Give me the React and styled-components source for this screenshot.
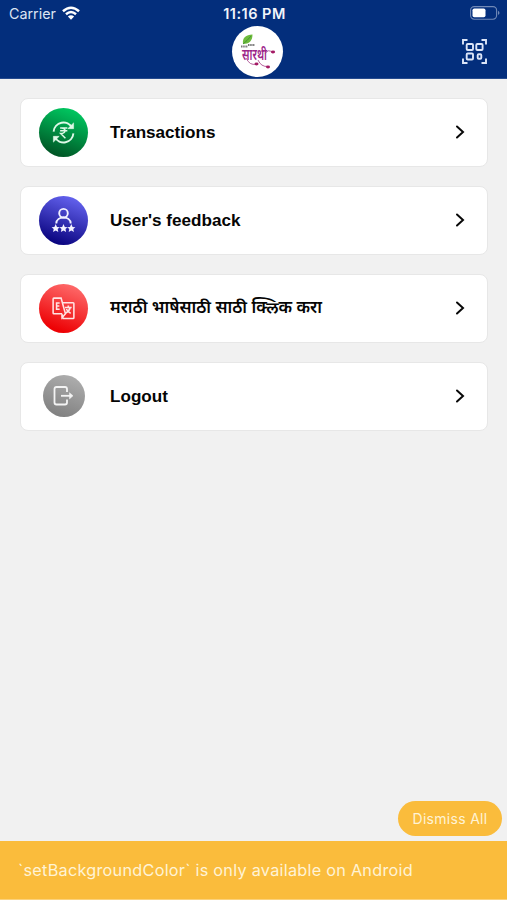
import React from 'react'
import styled, { createGlobalStyle } from 'styled-components'

const GlobalStyle = createGlobalStyle`
	* {
		box-sizing: border-box;
	}

	body {
		margin: 0;
		background: #f1f1f1;
		font-family: 'Liberation Sans', 'Noto Sans', sans-serif;
	}
`

const Screen = styled.div`
	display: flex;
	flex-direction: column;
	width: 100%;
	height: 900px;
	overflow: hidden;
	background: #f1f1f1;
`

const Header = styled.header`
	height: 79px;
	flex-shrink: 0;
	background: #032e7c;
	border-bottom: 1px solid #264b8f;
	color: #fff;
`

const HeaderRow = styled.div`
	display: grid;
	grid-template-columns: 1fr auto 1fr;
	align-items: center;
	height: ${props => props.height};
	padding: 0 ${props => props.right} 0 ${props => props.left};

	> :last-child {
		justify-self: end;
	}
`

const Carrier = styled.div`
	display: flex;
	align-items: center;
	gap: 6px;
	padding-top: 1px;
	font: 400 14.3px Inter, sans-serif;
	color: #dce4f3;
`

const Clock = styled.time`
	padding-top: 1px;
	font: 600 14.5px Inter, sans-serif;
	letter-spacing: 0.5px;
	color: #f2f5fb;
`

const LogoCircle = styled.div`
	width: 51px;
	height: 51px;
	border-radius: 50%;
	background: #fff;
	overflow: hidden;
`

const Menu = styled.main`
	display: flex;
	flex-direction: column;
	flex: 1;
	gap: 19px;
	padding: 19px 19px 0 20px;
`

const MenuCard = styled.button`
	display: flex;
	align-items: center;
	height: 69px;
	padding: 0 21px 1px 18px;
	border: 1px solid #e7e7e7;
	border-radius: 8px;
	background: #fff;
	color: #050505;
	text-align: left;
	cursor: pointer;
`

const IconSlot = styled.span`
	display: flex;
	justify-content: center;
	width: 49px;
	margin-right: 22px;
`

const IconCircle = styled.span`
	display: flex;
	align-items: center;
	justify-content: center;
	width: ${props => props.size}px;
	height: ${props => props.size}px;
	border-radius: 50%;
	background: ${props => props.fill};
`

const MenuLabel = styled.span`
	flex: 1;
	padding-top: 2px;
	font: 700 17.1px 'Liberation Sans', 'Noto Sans', sans-serif;
	white-space: nowrap;
`

const MarathiLabel = styled(MenuLabel)`
	padding: 0 0 3px;
	font: 600 16.85px 'Noto Sans', 'Noto Sans Devanagari', sans-serif;
`

const Footer = styled.footer`
	display: flex;
	flex-direction: column;
`

const DismissButton = styled.button`
	align-self: flex-end;
	width: 104px;
	height: 35px;
	margin: 0 5px 5px 0;
	padding: 0;
	border: none;
	border-radius: 18px;
	background: #fabc3c;
	color: #fff3d5;
	font: 400 14px Inter, sans-serif;
	letter-spacing: 0.3px;
	cursor: pointer;
`

const Warning = styled.div`
	display: flex;
	align-items: center;
	height: 59px;
	padding: 0 18px;
	background: #fabc3c;
	border-bottom: 1px solid #fbd27c;
	color: #fff3d5;
	font: 400 16.3px Inter, sans-serif;
	letter-spacing: 0.24px;
	white-space: nowrap;
`

const WifiIcon = () => (
	<svg width="18" height="15" viewBox="0 0 19 15" fill="none" stroke="#fff" strokeWidth="2.6">
		<path d="M1 5.1Q9.5 -2.4 18 5.1" />
		<path d="M4.2 8.3Q9.5 3.6 14.8 8.3" />
		<path d="M6.2 10.7Q9.5 8 12.8 10.7L9.5 14Z" fill="#fff" stroke="none" />
	</svg>
)

const BatteryIcon = () => (
	<svg width="30" height="14" viewBox="0 0 30 14">
		<rect x="0.6" y="0.6" width="26" height="12.6" rx="3.6" fill="none" stroke="#7189b7" strokeWidth="1.1" />
		<rect x="2.5" y="2.5" width="13" height="8.8" rx="1.8" fill="#fff" />
		<path d="M28 4.7Q31 6.9 28 9.1Z" fill="#7189b7" />
	</svg>
)

const QrIcon = () => (
	<svg width="25" height="25" viewBox="0 0 25 25" fill="none" stroke="#dce5f8" strokeWidth="1.9">
		<path d="M1 5.5V1H5.5M19.5 1H24V5.5M24 19.5V24H19.5M5.5 24H1V19.5" />
		<rect x="4.7" y="5" width="6.3" height="6" rx="1" />
		<rect x="14.3" y="5" width="6.3" height="6" rx="1" />
		<rect x="4.7" y="14.5" width="6.3" height="6" rx="1" />
		<rect x="15.7" y="15.3" width="3.6" height="4.4" rx="1" />
	</svg>
)

const Logo = () => (
	<svg width="51" height="51" viewBox="0 0 51 51">
		<path d="M11 18C10 12 14 8.500 20.500 8.500C20.500 15 17 18 11 18Z" fill="#6dbb3c" />
		<path d="M11 18Q15 15 19 10" fill="none" stroke="#3f8d32" strokeWidth="0.8" />
		<path d="M9 20.500H16M16 19H23" stroke="#777" strokeWidth="2" strokeDasharray="1.5 0.7" />
		<text x="10" y="34" fill="#9c2589" fontFamily="'Noto Sans', sans-serif" fontSize="15.5" fontWeight="600" textLength="25" lengthAdjust="spacingAndGlyphs">सारथी</text>
		<g fill="none" stroke="#a33b85" strokeWidth="0.8">
			<path d="M33 28Q36 22 41 27" />
			<path d="M14 32Q18 40 24 38" />
			<path d="M26 34Q29 41 36 40.500" />
		</g>
		<g fill="#a41a64">
			<ellipse cx="41" cy="26" rx="2.1" ry="1.4" />
			<ellipse cx="24.5" cy="38" rx="2" ry="1.4" />
			<ellipse cx="36" cy="41" rx="2" ry="1.4" />
		</g>
	</svg>
)

const TransactionsIcon = () => (
	<svg width="25" height="25" viewBox="0 0 26 26" fill="none" stroke="#dff9e8" strokeWidth="2">
		<path d="M2.7 12A10.3 10.3 0 0 1 22 8M23.3 14A10.3 10.3 0 0 1 4 18" />
		<path d="M23.5 3V9H17.5ZM2.5 23V17H8.5Z" fill="#dff9e8" strokeWidth="0.6" />
		<path d="M9.5 8.3H17M9.5 11.2H17M11 8.3C16 8.3 16 14 10 14L15 19" strokeWidth="1.5" />
	</svg>
)

const star = 'M0 -4.2L1.3 -1.4L4.1 -1.1L2 0.8L2.6 3.7L0 2.3L-2.6 3.7L-2 0.8L-4.1 -1.1L-1.3 -1.4Z'

const FeedbackIcon = () => (
	<svg width="26" height="26" viewBox="0 0 26 26" fill="none" stroke="#f0f0ff" strokeWidth="1.9">
		<circle cx="12.5" cy="6.2" r="4.3" />
		<path d="M5.300 16.500C5.500 8.500 19.500 8.500 19.700 16.500" />
		<g fill="#f4f3ff" stroke="none">
			<path d={star} transform="translate(4.7 21.3)" />
			<path d={star} transform="translate(12.5 21.3)" />
			<path d={star} transform="translate(20.3 21.3)" />
		</g>
	</svg>
)

const LanguageIcon = () => (
	<svg width="25" height="25" viewBox="0 0 26 26" fill="none" stroke="#ffe4e4" strokeWidth="1.6">
		<path d="M11.5 18.5H3Q2.2 18.5 2.2 17.7V3Q2.2 2.2 3 2.2H10.5L15 18.5L11.5 22.5V18.5" />
		<path d="M11.8 7H23Q23.8 7 23.8 7.8V22.5Q23.8 23.3 23 23.3H12.5L11.5 20" />
		<path d="M9 7.2H5.8V13.7H9M5.8 10.4H8.7" strokeWidth="1.6" />
		<path d="M14.5 12H21.5M18 10V12M20 12Q19 16 15 18M16 13.5Q17.5 17 20.5 18" strokeWidth="1.7" />
	</svg>
)

const LogoutIcon = () => (
	<svg width="23" height="22" viewBox="0 0 23 22" fill="none" stroke="#f3f3f3" strokeWidth="1.8">
		<path d="M15 7V4Q15 2 13 2H4.5Q2.5 2 2.5 4V17.5Q2.5 19.500 4.500 19.500H13Q15 19.500 15 17.500V14.500" />
		<path d="M9 10.800H19" />
		<path d="M17.500 7.700L21 10.800L17.500 13.900Z" fill="#f3f3f3" strokeWidth="0.5" />
	</svg>
)

const Chevron = () => (
	<svg width="12" height="16" viewBox="0 0 12 16" fill="none" stroke="#080808" strokeWidth="2" strokeLinecap="round">
		<path d="M3 2.5L9 8L3 13.5" />
	</svg>
)

const menuItems = [
	{ label: 'Transactions', Icon: TransactionsIcon, size: 49, fill: 'linear-gradient(200deg, #00cf64 5%, #004c20 95%)' },
	{ label: "User's feedback", Icon: FeedbackIcon, size: 49, fill: 'linear-gradient(200deg, #6968f5 5%, #08027d 90%)' },
	{ label: 'मराठी भाषेसाठी साठी क्लिक करा', Icon: LanguageIcon, size: 49, fill: 'linear-gradient(200deg, #ff7070 5%, #ed0205 85%)', marathi: true },
	{ label: 'Logout', Icon: LogoutIcon, size: 42, fill: 'linear-gradient(200deg, #b0b0b0 5%, #7d7d7d 95%)' },
]

const App = () => {
	return (
		<Screen>
			<GlobalStyle />
			<Header>
				<HeaderRow height="26px" left="9px" right="7px">
					<Carrier>Carrier <WifiIcon /></Carrier>
					<Clock>11:16 PM</Clock>
					<BatteryIcon />
				</HeaderRow>
				<HeaderRow height="51px" left="27px" right="20px">
					<span />
					<LogoCircle><Logo /></LogoCircle>
					<QrIcon />
				</HeaderRow>
			</Header>
			<Menu>
				{menuItems.map(({ label, Icon, size, fill, marathi }) => (
					<MenuCard key={label}>
						<IconSlot>
							<IconCircle size={size} fill={fill}><Icon /></IconCircle>
						</IconSlot>
						{marathi ? <MarathiLabel lang="mr">{label}</MarathiLabel> : <MenuLabel>{label}</MenuLabel>}
						<Chevron />
					</MenuCard>
				))}
			</Menu>
			<Footer>
				<DismissButton>Dismiss All</DismissButton>
				<Warning>`setBackgroundColor` is only available on Android</Warning>
			</Footer>
		</Screen>
	)
}

export default App
